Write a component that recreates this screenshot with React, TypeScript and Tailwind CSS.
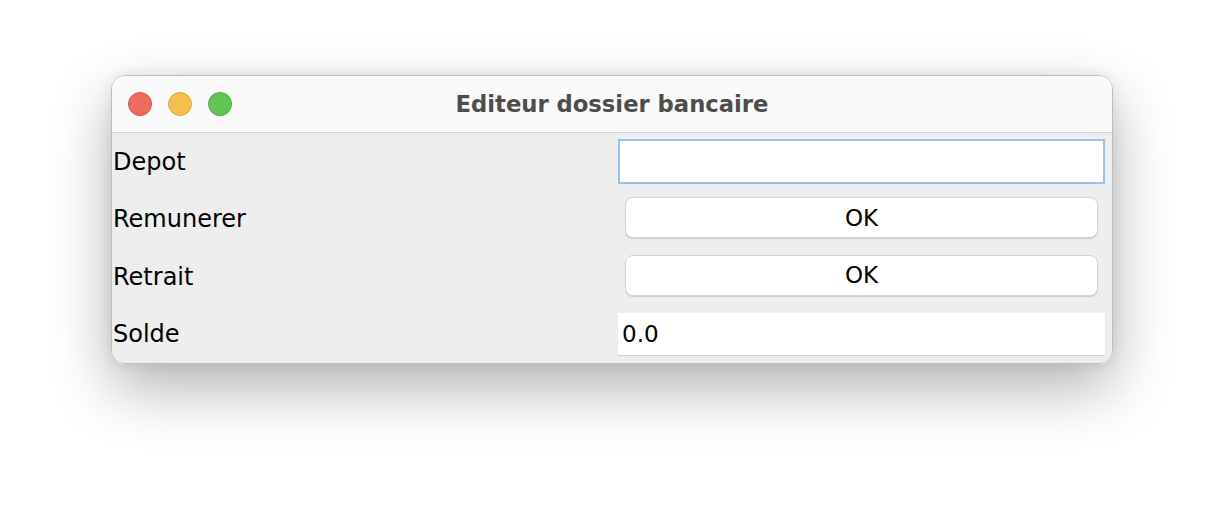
import React from "react";

const rows = [
  { label: "Depot", kind: "input" },
  { label: "Remunerer", kind: "button" },
  { label: "Retrait", kind: "button" },
  { label: "Solde", kind: "value" },
];

function TrafficLights() {
  return (
    <div className="flex items-center gap-4">
      <span className="h-6 w-6 rounded-full border border-[#d9534a] bg-[#ee6a5f]" />
      <span className="h-6 w-6 rounded-full border border-[#dda33a] bg-[#f5be4f]" />
      <span className="h-6 w-6 rounded-full border border-[#4ba83c] bg-[#62c554]" />
    </div>
  );
}

export default function App() {
  return (
    <div className="h-[512px] w-[1224px] bg-white pl-[111px] pt-[75px] font-['DejaVu_Sans',sans-serif]">
      <div className="w-[1002px] overflow-hidden rounded-[14px] border border-[#bdbdbd] shadow-[0_24px_60px_rgba(0,0,0,0.3),0_0_14px_rgba(0,0,0,0.08)]">
        <div className="relative flex h-[57px] items-center border-b border-[#d2d2d2] bg-[#fafafa] pl-[16px]">
          <TrafficLights />
          <div className="absolute inset-0 flex items-center justify-center text-[22.7px] font-bold text-[#4d4d4d]">
            Editeur dossier bancaire
          </div>
        </div>
        <div className="bg-[#eeeeee]">
          {rows.map((row) => (
            <div key={row.label} className="grid h-[57.5px] grid-cols-[506px_487px] items-center">
              <span className="pl-[1px] text-[24px] text-black">{row.label}</span>
              {row.kind === "input" && (
                <div className="h-[45px] border-2 border-[#95c2f3] bg-white" />
              )}
              {row.kind === "button" && (
                <div className="mx-[7px] mb-[3px] flex h-[41px] items-center justify-center rounded-[8px] border border-[#d4d4d4] bg-white text-[23px] text-black shadow-[0_1px_1px_rgba(0,0,0,0.15)]">
                  OK
                </div>
              )}
              {row.kind === "value" && (
                <div className="flex h-[42px] items-center bg-white pl-[4px] text-[23px] text-black shadow-[0_1px_1px_rgba(0,0,0,0.12)]">
                  0.0
                </div>
              )}
            </div>
          ))}
        </div>
      </div>
    </div>
  );
}
